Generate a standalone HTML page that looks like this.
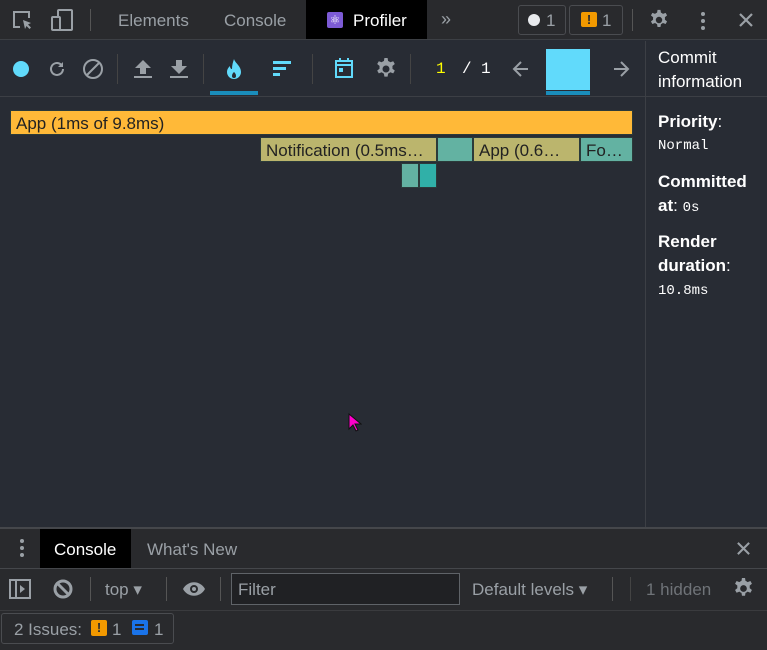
<!DOCTYPE html>
<html><head><style>
*{margin:0;padding:0;box-sizing:border-box}
body{width:767px;height:650px;overflow:hidden;background:#282c34;font-family:"Liberation Sans",sans-serif;position:relative;color:#ccc}
.a{position:absolute}
.t{font-size:17px;color:#9aa0a6;white-space:nowrap}
.bar{position:absolute;height:25px;border:1px solid #2b3a3a;font-size:17px;color:#222;padding:3px 5px 0;white-space:nowrap;overflow:hidden}
.mono{font-family:"Liberation Mono",monospace}
</style></head><body>
<svg width="0" height="0" style="position:absolute"><defs>
<path id="gear" d="M10.4 1h3.2l.5 3a8 8 0 0 1 2.2 1.3l2.9-1.1 1.6 2.8-2.4 2a8 8 0 0 1 0 2.6l2.4 2-1.6 2.8-2.9-1.1a8 8 0 0 1-2.2 1.3l-.5 3h-3.2l-.5-3a8 8 0 0 1-2.2-1.3l-2.9 1.1-1.6-2.8 2.4-2a8 8 0 0 1 0-2.6l-2.4-2 1.6-2.8 2.9 1.1a8 8 0 0 1 2.2-1.3zM12 8.5a3.5 3.5 0 1 0 0 7 3.5 3.5 0 0 0 0-7z" fill-rule="evenodd"/>
</defs></svg>
<!-- top tab bar -->
<div class="a" style="left:0;top:0;width:767px;height:40px;background:#292a2d;border-bottom:1px solid #3c3f44"></div>
<svg class="a" style="left:10px;top:8px" width="24" height="24" viewBox="0 0 24 24" fill="none" stroke="#9aa0a6" stroke-width="2"><path d="M10 19H4V4h15v6"/><path d="M13 12l8 3-3 1.5 3 3-1.5 1.5-3-3L15 21z" fill="#9aa0a6" stroke="none"/></svg>
<svg class="a" style="left:50px;top:8px" width="24" height="24" viewBox="0 0 24 24" fill="none" stroke="#9aa0a6" stroke-width="2"><rect x="8" y="2" width="14" height="20" rx="1"/><rect x="2" y="9" width="8" height="13" rx="1" fill="#292a2d"/></svg>
<div class="a" style="left:90px;top:9px;width:1px;height:22px;background:#555"></div>
<div class="a t" style="left:118px;top:11px">Elements</div>
<div class="a t" style="left:224px;top:11px">Console</div>
<div class="a" style="left:306px;top:0;width:121px;height:39px;background:#000"></div>
<div class="a" style="left:327px;top:12px;width:16px;height:16px;background:#7d5bd6;border-radius:2px;color:#fff;font-size:12px;text-align:center;line-height:16px">⚛</div>
<div class="a t" style="left:353px;top:11px;color:#fff">Profiler</div>
<div class="a t" style="left:441px;top:9px;font-size:18px">»</div>
<div class="a" style="left:518px;top:5px;width:48px;height:30px;border:1px solid #4a4c50;border-radius:3px"></div>
<div class="a" style="left:528px;top:14px;width:12px;height:12px;border-radius:50%;background:#e8eaed"></div>
<div class="a t" style="left:546px;top:11px">1</div>
<div class="a" style="left:569px;top:5px;width:54px;height:30px;border:1px solid #4a4c50;border-radius:3px"></div>
<div class="a" style="left:581px;top:12px;width:16px;height:15px;background:#f29900;border-radius:2px;color:#292a2d;font-weight:bold;font-size:13px;text-align:center;line-height:15px">!</div>
<div class="a t" style="left:602px;top:11px">1</div>
<div class="a" style="left:632px;top:9px;width:1px;height:22px;background:#555"></div>
<svg class="a" style="left:648px;top:9px" width="22" height="22" viewBox="0 0 24 24" fill="#9aa0a6"><use href="#gear"/></svg>
<div class="a" style="left:701px;top:12px;width:4px;height:4px;border-radius:50%;background:#9aa0a6;box-shadow:0 7px 0 #9aa0a6,0 14px 0 #9aa0a6"></div>
<svg class="a" style="left:738px;top:12px" width="16" height="16" viewBox="0 0 16 16" stroke="#9aa0a6" stroke-width="2.2"><path d="M2 2l12 12M14 2L2 14"/></svg>
<!-- profiler toolbar -->
<div class="a" style="left:0;top:96px;width:645px;height:1px;background:#3c3f45"></div>
<div class="a" style="left:645px;top:41px;width:1px;height:486px;background:#3c3f45"></div>
<div class="a" style="left:646px;top:96px;width:121px;height:1px;background:#3c3f45"></div>
<div class="a" style="left:13px;top:61px;width:16px;height:16px;border-radius:50%;background:#61dafb"></div>
<svg class="a" style="left:47px;top:59px" width="20" height="20" viewBox="0 0 20 20" fill="none" stroke="#9aa0a6" stroke-width="2"><path d="M16 10a6 6 0 1 1-2-4.5"/><path d="M16 3v5h-5z" fill="#9aa0a6" stroke="none"/></svg>
<svg class="a" style="left:82px;top:58px" width="22" height="22" viewBox="0 0 22 22" fill="none" stroke="#9aa0a6" stroke-width="2"><circle cx="11" cy="11" r="9"/><path d="M5 17L17 5"/></svg>
<div class="a" style="left:117px;top:54px;width:1px;height:30px;background:#444"></div>
<svg class="a" style="left:133px;top:58px" width="20" height="22" viewBox="0 0 20 22" fill="#9aa0a6"><path d="M10 2l8 8h-5v6H7v-6H2z"/><rect x="1" y="18" width="18" height="2"/></svg>
<svg class="a" style="left:169px;top:58px" width="20" height="22" viewBox="0 0 20 22" fill="#9aa0a6"><path d="M10 16l8-8h-5V2H7v6H2z"/><rect x="1" y="18" width="18" height="2"/></svg>
<div class="a" style="left:203px;top:54px;width:1px;height:30px;background:#444"></div>
<svg class="a" style="left:225px;top:58px" width="18" height="22" viewBox="0 0 18 22"><path d="M9 1c1 4 7 7 7 13a7 7 0 0 1-14 0c0-3 2-5 3-6 0 2 1 3 2 3 0-4 1-7 2-10z" fill="#61dafb"/><path d="M9 14c1 1 2 2 2 4a2 2 0 0 1-4 0c0-2 1-3 2-4z" fill="#282c34"/></svg>
<div class="a" style="left:210px;top:91px;width:48px;height:4px;background:#1a8dbb"></div>
<svg class="a" style="left:272px;top:60px" width="20" height="18" viewBox="0 0 20 18" fill="#61dafb"><rect x="1" y="1" width="18" height="3"/><rect x="1" y="7" width="13" height="3"/><rect x="1" y="13" width="7" height="3"/></svg>
<div class="a" style="left:312px;top:54px;width:1px;height:30px;background:#444"></div>
<svg class="a" style="left:334px;top:57px" width="20" height="22" viewBox="0 0 20 22" fill="none" stroke="#61dafb" stroke-width="2"><rect x="2" y="4" width="16" height="16"/><path d="M2 8h16M6 1v4M14 1v4"/><rect x="5" y="11" width="4" height="4" fill="#61dafb" stroke="none"/></svg>
<svg class="a" style="left:374px;top:57px" width="24" height="24" viewBox="0 0 24 24" fill="#9aa0a6"><use href="#gear"/></svg>
<div class="a" style="left:410px;top:54px;width:1px;height:30px;background:#444"></div>
<div class="a mono" style="left:436px;top:60px;font-size:16px;color:#ffff00">1</div>
<div class="a mono" style="left:462px;top:60px;font-size:16px;color:#fff">/</div>
<div class="a mono" style="left:481px;top:60px;font-size:16px;color:#fff">1</div>
<svg class="a" style="left:512px;top:60px" width="18" height="18" viewBox="0 0 18 18" fill="none" stroke="#9aa0a6" stroke-width="2"><path d="M16 9H2M9 2L2 9l7 7"/></svg>
<div class="a" style="left:546px;top:49px;width:44px;height:41px;background:#61dafb"></div>
<div class="a" style="left:546px;top:91px;width:44px;height:4px;background:#1a8dbb"></div>
<svg class="a" style="left:612px;top:60px" width="18" height="18" viewBox="0 0 18 18" fill="none" stroke="#9aa0a6" stroke-width="2"><path d="M2 9h14M9 2l7 7-7 7"/></svg>
<div class="a" style="left:658px;top:46px;font-size:17px;color:#fff;line-height:24px">Commit<br>information</div>
<!-- flame -->
<div class="bar" style="left:10px;top:110px;width:623px;background:#ffb938">App (1ms of 9.8ms)</div>
<div class="bar" style="left:260px;top:137px;width:177px;background:#bbb56d">Notification (0.5ms…</div>
<div class="bar" style="left:437px;top:137px;width:36px;background:#63b2a2"></div>
<div class="bar" style="left:473px;top:137px;width:107px;background:#bbb56d">App (0.6…</div>
<div class="bar" style="left:580px;top:137px;width:53px;background:#63b2a2">Fo…</div>
<div class="bar" style="left:401px;top:163px;width:18px;background:#63b2a2"></div>
<div class="bar" style="left:419px;top:163px;width:18px;background:#30b0a8"></div>
<!-- right info -->
<div class="a" style="left:658px;top:110px;font-size:17px;color:#fff;line-height:24px"><b>Priority</b>:</div>
<div class="a mono" style="left:658px;top:138px;font-size:14px;color:#fff">Normal</div>
<div class="a" style="left:658px;top:170px;font-size:17px;color:#fff;line-height:24px"><b>Committed<br>at</b>: <span class="mono" style="font-size:14px">0s</span></div>
<div class="a" style="left:658px;top:230px;font-size:17px;color:#fff;line-height:24px"><b>Render<br>duration</b>:</div>
<div class="a mono" style="left:658px;top:283px;font-size:14px;color:#fff">10.8ms</div>
<!-- cursor -->
<svg class="a" style="left:348px;top:413px" width="14" height="20" viewBox="0 0 14 20"><path d="M1 1v15l4-4 3 6 2-1-3-6h6z" fill="#ff00cc" stroke="#111" stroke-width="1"/></svg>
<!-- drawer -->
<div class="a" style="left:0;top:527px;width:767px;height:123px;background:#292a2d;border-top:2px solid #45474b"></div>
<div class="a" style="left:20px;top:539px;width:4px;height:4px;border-radius:50%;background:#9aa0a6;box-shadow:0 7px 0 #9aa0a6,0 14px 0 #9aa0a6"></div>
<div class="a" style="left:40px;top:529px;width:91px;height:39px;background:#000"></div>
<div class="a t" style="left:54px;top:540px;color:#fff">Console</div>
<div class="a t" style="left:147px;top:540px">What's New</div>
<svg class="a" style="left:736px;top:541px" width="15" height="15" viewBox="0 0 16 16" stroke="#9aa0a6" stroke-width="2.2"><path d="M2 2l12 12M14 2L2 14"/></svg>
<div class="a" style="left:0;top:568px;width:767px;height:1px;background:#45474b"></div>
<svg class="a" style="left:8px;top:578px" width="24" height="22" viewBox="0 0 24 22" fill="none" stroke="#9aa0a6" stroke-width="2"><rect x="2" y="2" width="20" height="18"/><path d="M8 2v18"/><path d="M12 7l5 4-5 4z" fill="#9aa0a6" stroke="none"/></svg>
<svg class="a" style="left:53px;top:579px" width="20" height="20" viewBox="0 0 20 20" fill="none" stroke="#9aa0a6" stroke-width="3"><circle cx="10" cy="10" r="8"/><path d="M5 5l10 10"/></svg>
<div class="a" style="left:90px;top:577px;width:1px;height:24px;background:#555"></div>
<div class="a t" style="left:105px;top:580px;font-size:17px">top ▾</div>
<div class="a" style="left:166px;top:577px;width:1px;height:24px;background:#555"></div>
<svg class="a" style="left:182px;top:581px" width="24" height="16" viewBox="0 0 24 16"><path d="M1 8c5-9 17-9 22 0-5 9-17 9-22 0z" fill="#9aa0a6"/><circle cx="12" cy="8" r="4" fill="#292a2d"/><circle cx="12" cy="8" r="2" fill="#9aa0a6"/></svg>
<div class="a" style="left:220px;top:577px;width:1px;height:24px;background:#555"></div>
<div class="a" style="left:231px;top:573px;width:229px;height:32px;background:#202124;border:1px solid #5f6368"></div>
<div class="a t" style="left:238px;top:580px;font-size:17px">Filter</div>
<div class="a t" style="left:472px;top:580px;font-size:17px">Default levels ▾</div>
<div class="a" style="left:612px;top:577px;width:1px;height:24px;background:#555"></div>
<div class="a" style="left:630px;top:577px;width:1px;height:24px;background:#444"></div>
<div class="a t" style="left:646px;top:580px;font-size:17px;color:#6f7378">1 hidden</div>
<svg class="a" style="left:732px;top:577px" width="23" height="23" viewBox="0 0 24 24" fill="#9aa0a6"><use href="#gear"/></svg>
<div class="a" style="left:0;top:610px;width:767px;height:1px;background:#3a3b3e"></div>
<div class="a" style="left:1px;top:613px;width:173px;height:31px;border:1px solid #4a4c50;border-radius:3px"></div>
<div class="a t" style="left:14px;top:620px">2 Issues:</div>
<div class="a" style="left:91px;top:620px;width:16px;height:16px;background:#f29900;border-radius:2px;color:#292a2d;font-weight:bold;font-size:13px;text-align:center;line-height:16px">!</div>
<div class="a t" style="left:112px;top:620px">1</div>
<div class="a" style="left:132px;top:620px;width:16px;height:15px;background:#1a73e8;border-radius:2px"></div>
<div class="a" style="left:135px;top:624px;width:9px;height:2px;background:#292a2d;box-shadow:0 4px 0 #292a2d"></div>
<div class="a t" style="left:154px;top:620px">1</div>
</body></html>
